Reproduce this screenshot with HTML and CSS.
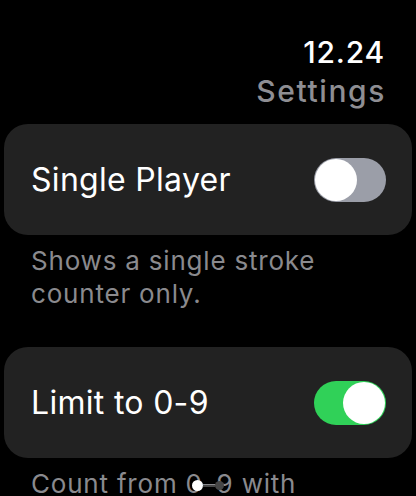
FILE: index.html
```html
<!DOCTYPE html>
<html lang="en">
<head>
    <meta charset="UTF-8">
    <meta name="viewport" content="width=device-width, initial-scale=1.0">
    <title>Settings</title>
    <link rel="stylesheet" href="styles.css">
</head>
<body>
    <div class="screen">
        <div class="header">
            <div class="time">12.24</div>
            <div class="title">Settings</div>
        </div>
        <div class="card">
            <span class="label">Single Player</span>
            <div class="toggle"><div class="knob"></div></div>
        </div>
        <p class="note">Shows a single stroke counter only.</p>
        <div class="card">
            <span class="label">Limit to 0-9</span>
            <div class="toggle on"><div class="knob"></div></div>
        </div>
        <p class="note">Count from 0–9 with</p>
        <div class="pager">
            <span class="dot active"></span>
            <span class="line"></span>
            <span class="dot"></span>
        </div>
    </div>
</body>
</html>
```

FILE: styles.css
```css
*{
    margin: 0;
    padding: 0;
    box-sizing: border-box;
}
html, body{
    height: 100%;
    background-color: black;
    overflow: hidden;
}
.screen{
    position: relative;
    height: 496px;
    overflow: hidden;
    font-family: Inter, "Noto Sans", sans-serif;
    color: white;
}
.header{
    padding-top: 33px;
    padding-right: 32px;
    text-align: right;
    font-size: 30px;
    line-height: 39px;
    font-weight: 500;
    height: 124px;
}
.time{
    letter-spacing: 0.8px;
    margin-right: -1px;
}
.title{
    color: rgb(142, 142, 147);
    letter-spacing: 1.6px;
    margin-right: -2px;
}
.card{
    display: flex;
    align-items: center;
    justify-content: space-between;
    margin: 0 4px;
    height: 111px;
    padding: 0 26px 0 27px;
    border-radius: 24px;
    background-color: rgb(34, 34, 34);
}
.label{
    font-size: 32px;
    letter-spacing: 0.3px;
}
.toggle{
    width: 72px;
    height: 44px;
    border-radius: 22px;
    background-color: rgb(155, 158, 168);
    padding: 1px;
    display: flex;
}
.toggle.on{
    background-color: rgb(48, 209, 88);
    justify-content: flex-end;
}
.knob{
    width: 42px;
    height: 42px;
    border-radius: 50%;
    background-color: white;
}
.note{
    padding: 9px 31px 37px;
    font-size: 26px;
    line-height: 33px;
    letter-spacing: 0.8px;
    color: rgb(138, 138, 142);
}
.pager{
    position: absolute;
    left: 192px;
    top: 480px;
    display: flex;
    align-items: center;
}
.dot{
    width: 9px;
    height: 9px;
    border-radius: 50%;
    background-color: rgb(70, 70, 70);
}
.dot.active{
    width: 11px;
    height: 11px;
    background-color: white;
}
.line{
    width: 12px;
    height: 2px;
    background-color: rgb(70, 70, 70);
}
```
